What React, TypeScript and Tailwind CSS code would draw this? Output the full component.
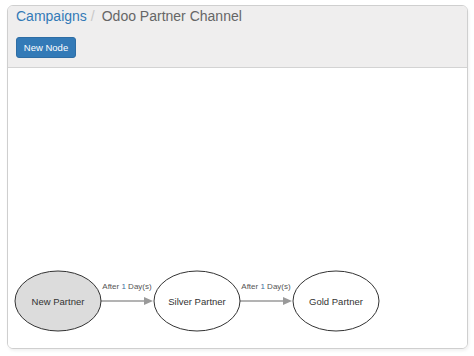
import React from 'react';

type Node = { id: string; label: string; cx: number; active?: boolean };

const nodes: Node[] = [
  { id: 'new', label: 'New Partner', cx: 50, active: true },
  { id: 'silver', label: 'Silver Partner', cx: 189 },
  { id: 'gold', label: 'Gold Partner', cx: 328 },
];

const CY = 233;
const RX = 43;
const RY = 30;

function Diagram() {
  return (
    <svg width="459" height="279" className="block" style={{ fontFamily: '"Liberation Sans", Arial, sans-serif' }}>
      {/* transitions */}
      {nodes.slice(0, -1).map((n, i) => {
        const next = nodes[i + 1];
        const x1 = n.cx + RX;
        const x2 = next.cx - RX - 1;
        const mid = (x1 + x2) / 2;
        return (
          <g key={n.id + '-arrow'}>
            <line x1={x1} y1={CY} x2={x2 - 8} y2={CY} stroke="#9a9a9a" strokeWidth="1.3" />
            <polygon points={`${x2 - 9},${CY - 4} ${x2},${CY} ${x2 - 9},${CY + 4}`} fill="#9a9a9a" />
            <text x={mid} y={CY - 12} fontSize="8" fill="#555" textAnchor="middle">
              After <tspan fill="#3d6e9e">1</tspan> Day(s)
            </text>
          </g>
        );
      })}
      {/* activities */}
      {nodes.map((n) => (
        <g key={n.id}>
          <ellipse cx={n.cx} cy={CY} rx={RX} ry={RY} fill={n.active ? '#dcdcdc' : '#ffffff'} stroke="#333" strokeWidth="1" />
          <text x={n.cx} y={CY + 3.5} fontSize="9.5" fill="#333" textAnchor="middle">
            {n.label}
          </text>
        </g>
      ))}
    </svg>
  );
}

export default function App() {
  return (
    <div className="w-[474px] h-[356px] bg-white pt-[5px] pl-[7px]" style={{ fontFamily: '"Liberation Sans", Arial, sans-serif' }}>
      <div className="w-[461px] h-[344px] border border-[#cfcfcf] rounded-[6px] overflow-hidden flex flex-col shadow-[1px_2px_3px_rgba(0,0,0,0.06)]">
        {/* header */}
        <div className="h-[62px] bg-[#efeeee] border-b border-[#d3d3d3] px-[8px] pt-[1px] flex flex-col">
          <div className="text-[14px] leading-[18px] flex items-center">
            <span className="text-[#337ab7]">Campaigns</span>
            <span className="text-[#c8c8c8] ml-[4px] mr-[7px]">/</span>
            <span className="text-[#666]">Odoo Partner Channel</span>
          </div>
          <button className="mt-[12px] w-[60px] h-[21px] rounded-[3px] bg-[#337ab7] border border-[#2e6da4] text-white text-[9.5px] leading-none">
            New Node
          </button>
        </div>
        {/* canvas */}
        <div className="flex-1 bg-white">
          <Diagram />
        </div>
      </div>
    </div>
  );
}
